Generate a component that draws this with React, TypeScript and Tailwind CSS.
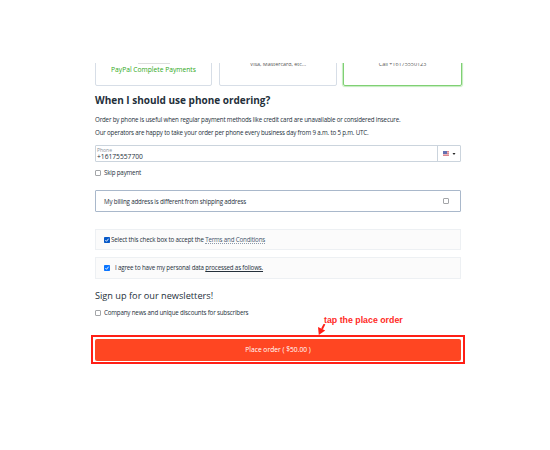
import type { ReactNode } from 'react';

function Checkbox({ checked = false, color = '#0b6bf0' }: { checked?: boolean; color?: string }) {
  if (!checked) {
    return <span className="block h-[6px] w-[6px] shrink-0 rounded-[1px] border border-[#a3a5a8] bg-white" />;
  }
  return (
    <svg viewBox="0 0 12 12" className="block h-[6px] w-[6px] shrink-0">
      <rect width="12" height="12" rx="1.5" fill={color} />
      <path d="M2.8 6.3 5 8.6 9.2 3.4" fill="none" stroke="#fff" strokeWidth="1.8" />
    </svg>
  );
}

function ConsentRow({ children, className }: { children: ReactNode; className: string }) {
  return (
    <div className={`flex items-center border border-[#edf0f3] bg-[#fbfbfb] ${className}`}>{children}</div>
  );
}

export default function App() {
  return (
    <div className="h-[450px] w-[550px] overflow-hidden bg-white pt-[63px] font-['Open_Sans',sans-serif] text-[6.2px] leading-[8px] tracking-[-0.17px] whitespace-nowrap text-[#25303b]">
      <div className="ml-[95px] w-[366px]">
        {/* Payment methods, scrolled under the top edge */}
        <div className="-ml-[2px] h-[26px] w-[372px] overflow-hidden pl-[2px]">
          <div className="-mt-[4px] flex tracking-normal">
            <div className="flex h-[27px] w-[117px] flex-col items-center rounded-[2px] border border-[#d7dee7] text-[#30a820]">
              <div className="mt-[2px] h-[2px] w-[32px] border-b border-[#dedede]" />
              <p className="mt-[1px] text-[6.7px] leading-[9px]">PayPal Complete Payments</p>
            </div>
            <div className="ml-[7px] h-[27px] w-[118px] rounded-[2px] border border-[#d7dee7] text-center text-[5.4px] text-[#555]">
              <p>Visa, Mastercard, etc...</p>
            </div>
            <div className="ml-[6px] h-[27px] w-[119px] rounded-[2px] border border-[#7fd074] text-center text-[5.4px] text-[#555] shadow-[0_0_1px_1px_#c3ecbd]">
              <p>Call +16175550123</p>
            </div>
          </div>
        </div>

        <h2 className="mt-[4px] text-[10px] leading-[14px] font-bold tracking-normal text-[#242f3a]">When I should use phone ordering?</h2>
        <p className="mt-[9px]">
          Order by phone is useful when regular payment methods like credit card are unavailable or considered insecure.
        </p>
        <p className="mt-[5px]">
          Our operators are happy to take your order per phone every business day from 9 a.m. to 5 p.m. UTC.
        </p>

        <div className="mt-[8px] flex h-[17px] rounded-[1px] border border-[#cbd4dd] tracking-normal">
          <div className="flex-1 pl-[1px]">
            <p className="mt-[1px] text-[5px] leading-[6px] text-[#8a9299]">Phone</p>
            <p className="text-[6.7px] leading-[7px]">+16175557700</p>
          </div>
          <div className="flex w-[23px] items-center justify-center gap-[3px] border-l border-[#cbd4dd]">
            <svg viewBox="0 0 6 5" shapeRendering="crispEdges" className="h-[5px] w-[6px]">
              <rect width="6" height="5" fill="#e9b4ba" />
              <path d="M0 .5h6M0 2.5h6M0 4.5h6" stroke="#db8790" strokeWidth="1" />
              <rect width="4" height="3" fill="#6470b0" />
            </svg>
            <svg viewBox="0 0 6 4" className="h-[2px] w-[4px]">
              <path d="M0 0h6L3 4z" fill="#222" />
            </svg>
          </div>
        </div>

        <label className="mt-[7px] flex items-center gap-[3px]">
          <Checkbox />
          Skip payment
        </label>

        <div className="mt-[13px] flex h-[22px] items-center justify-between rounded-[1px] border border-[#a9b8cb] pr-[11px] pl-[8px]">
          <span className="pt-[1px]">My billing address is different from shipping address</span>
          <Checkbox />
        </div>

        <ConsentRow className="mt-[17px] h-[21px] gap-[2px] pl-[8px]">
          <Checkbox checked color="#0759c8" />
          <span className="-ml-[1px] pt-[1px]">
            Select this check box to accept the{' '}
            <a className="inline-block border-b border-dotted border-[#8d9aaa] leading-[7px] text-[#44566c]">Terms and Conditions</a>
          </span>
        </ConsentRow>
        <ConsentRow className="mt-[7px] h-[22px] gap-[6px] pl-[8px]">
          <Checkbox checked color="#0a75ff" />
          <span className="-ml-[1px]">
            I agree to have my personal data <a className="underline">processed as follows.</a>
          </span>
        </ConsentRow>

        <h3 className="mt-[10px] text-[9.2px] leading-[14px] tracking-normal">Sign up for our newsletters!</h3>
        <label className="mt-[6px] flex items-center gap-[3px]">
          <Checkbox />
          Company news and unique discounts for subscribers
        </label>

        <div className="relative -mx-[4px] mt-[18px] h-[29px] border-2 border-[#ff1f16] p-[2px] tracking-normal">
          <button className="block h-[22px] w-full rounded-[2px] bg-[#ff4622] text-center text-[6.7px] text-white">
            Place order ( $50.00 )
          </button>
          {/* Callout pointing at the button */}
          <p className="absolute -top-[22px] left-[231px] font-['Liberation_Sans',Arial,sans-serif] text-[8.8px] leading-[10px] font-bold text-[#ff2b26]">
            tap the place order
          </p>
          <svg viewBox="0 0 8 11" className="absolute -top-[13px] left-[225px] h-[11px] w-[8px]">
            <path d="M6.5 0 4 5" stroke="#ff1f16" strokeWidth="1.8" />
            <path d="M0 3 7.2 6.4 0.8 11z" fill="#ff1f16" />
          </svg>
        </div>
      </div>
    </div>
  );
}
